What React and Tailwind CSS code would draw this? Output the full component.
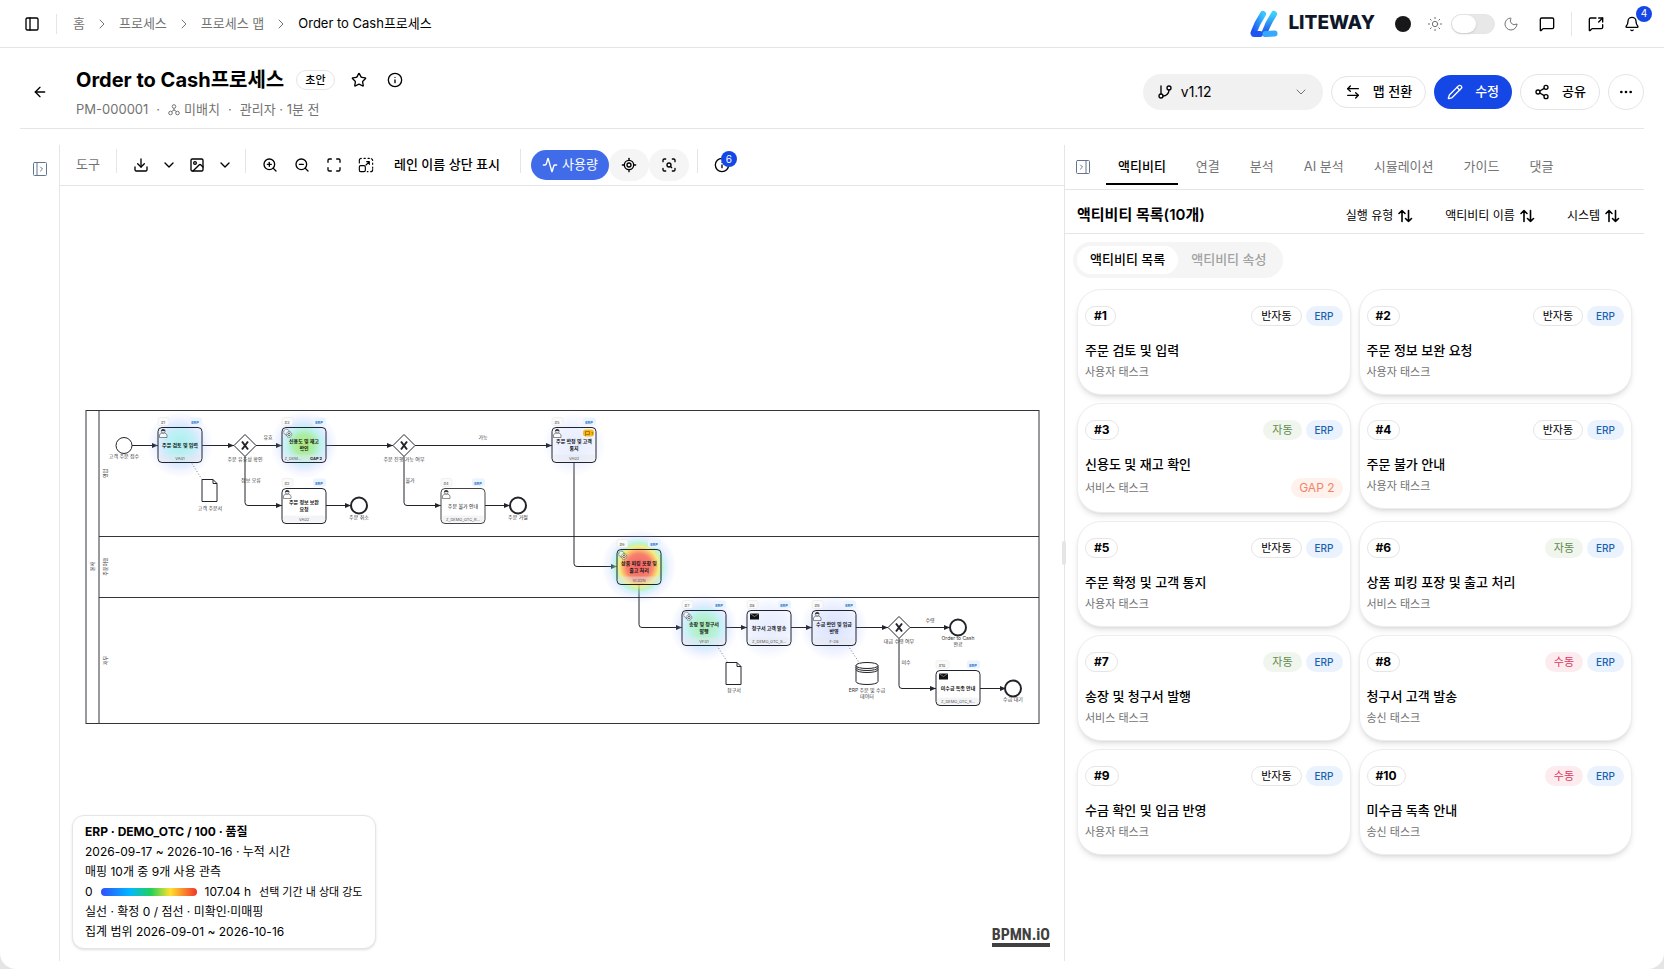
import React from 'react';
import {
  Activity, ArrowLeft, ArrowLeftRight, Bell, ChevronDown, ChevronRight, Download, Ellipsis, GitBranch,
  Image, Info, LocateFixed, Maximize, MessageSquare, MessageSquareShare, Moon, PanelLeft, Pencil, ScanSearch,
  Share2, Star, Sun, ZoomIn, ZoomOut,
} from 'lucide-react';

const activities = [
  { id: 1, mode: '반자동', name: '주문 검토 및 입력', type: '사용자 태스크' },
  { id: 2, mode: '반자동', name: '주문 정보 보완 요청', type: '사용자 태스크' },
  { id: 3, mode: '자동', name: '신용도 및 재고 확인', type: '서비스 태스크', gap: 'GAP 2' },
  { id: 4, mode: '반자동', name: '주문 불가 안내', type: '사용자 태스크' },
  { id: 5, mode: '반자동', name: '주문 확정 및 고객 통지', type: '사용자 태스크' },
  { id: 6, mode: '자동', name: '상품 피킹 포장 및 출고 처리', type: '서비스 태스크' },
  { id: 7, mode: '자동', name: '송장 및 청구서 발행', type: '서비스 태스크' },
  { id: 8, mode: '수동', name: '청구서 고객 발송', type: '송신 태스크' },
  { id: 9, mode: '반자동', name: '수금 확인 및 입금 반영', type: '사용자 태스크' },
  { id: 10, mode: '수동', name: '미수금 독촉 안내', type: '송신 태스크' },
];

const modeStyles = {
  반자동: 'border border-neutral-200 text-black',
  자동: 'bg-[#f0f5ee] text-[#5f8a4c]',
  수동: 'bg-[#fdecef] text-[#e0375c]',
};

const tabs = ['액티비티', '연결', '분석', 'AI 분석', '시뮬레이션', '가이드', '댓글'];

const tasks = [
  { id: 1, x: 158, y: 427, lines: ['주문 검토 및 입력'], code: 'VA01', kind: 'user', heat: 'cyan' },
  { id: 3, x: 282, y: 427, lines: ['신용도 및 재고', '확인'], code: 'Z_DEM...', kind: 'service', heat: 'green', gap: true },
  { id: 5, x: 552, y: 427, lines: ['주문 확정 및 고객', '통지'], code: 'VA02', kind: 'user', heat: 'blue', note: true },
  { id: 2, x: 282, y: 488, lines: ['주문 정보 보완', '요청'], code: 'VA02', kind: 'user' },
  { id: 4, x: 441, y: 488, lines: ['주문 불가 안내'], code: 'Z_DEMO_OTC_R...', kind: 'user', light: true },
  { id: 6, x: 617, y: 549, lines: ['상품 피킹 포장 및', '출고 처리'], code: 'VL02N', kind: 'service', heat: 'red' },
  { id: 7, x: 682, y: 610, lines: ['송장 및 청구서', '발행'], code: 'VF01', kind: 'service', heat: 'teal' },
  { id: 8, x: 747, y: 610, lines: ['청구서 고객 발송'], code: 'Z_DEMO_OTC_S...', kind: 'send', heat: 'blue' },
  { id: 9, x: 812, y: 610, lines: ['수금 확인 및 입금', '반영'], code: 'F-28', kind: 'user', heat: 'indigo' },
  { id: 10, x: 936, y: 670, lines: ['미수금 독촉 안내'], code: 'Z_DEMO_OTC_R...', kind: 'send' },
];

const heats = {
  cyan: { r: 33, stops: [['0', '#8fe9e6', 0.75], ['0.4', '#9be9f0', 0.65], ['0.62', '#9ccbff', 0.35], ['0.8', '#8fa8ff', 0.1], ['1', '#5b7bff', 0]] },
  green: { r: 34, stops: [['0', '#a5e65f', 0.85], ['0.3', '#8fe88a', 0.75], ['0.55', '#8de6ee', 0.5], ['0.7', '#8fb4ff', 0.22], ['0.85', '#7f9dff', 0.07], ['1', '#5b7bff', 0]] },
  teal: { r: 34, stops: [['0', '#93e8a8', 0.8], ['0.35', '#98ebc4', 0.7], ['0.55', '#8de0f3', 0.45], ['0.7', '#8fb4ff', 0.22], ['0.85', '#7f9dff', 0.07], ['1', '#5b7bff', 0]] },
  blue: { r: 32, stops: [['0', '#9db4ff', 0.25], ['0.6', '#9db4ff', 0.16], ['1', '#9db4ff', 0]] },
  indigo: { r: 34, stops: [['0', '#86a2ff', 0.32], ['0.6', '#86a2ff', 0.18], ['1', '#86a2ff', 0]] },
  red: { r: 37, stops: [['0', '#f2464a', 0.85], ['0.34', '#f5604a', 0.8], ['0.46', '#fbb24a', 0.8], ['0.54', '#ecea5c', 0.75], ['0.63', '#8fe8a0', 0.55], ['0.72', '#7fe0f5', 0.35], ['0.82', '#8fa8ff', 0.12], ['1', '#5b7bff', 0]] },
};

const flows = [
  'M132 445H158', 'M202 445H234', 'M256 445H282', 'M245 456V502Q245 505 248 505H282', 'M326 445H393',
  'M326 505H351', 'M415 445H552', 'M404 456V502Q404 505 407 505H441', 'M485 505H510',
  'M574 462V563Q574 566 577 566H617', 'M639 584V624Q639 627 642 627H682', 'M726 627H747', 'M791 627H812',
  'M856 627H888', 'M910 627H950', 'M899 638V685Q899 688 902 688H936', 'M980 688H1006',
];

const labels = [
  [124, 457, '고객 주문 접수'], [245, 460, '주문 유효성 확인'], [268, 438, '유효'], [251, 481, '정보 오류'],
  [404, 460, '주문 진행 가능 여부'], [483, 438, '가능'], [410, 481, '불가'], [359, 518, '주문 취소'],
  [518, 518, '주문 거절'], [210, 509, '고객 주문서'], [734, 691, '청구서'], [867, 691, 'ERP 주문 및 수금'],
  [867, 697, '데이터'], [899, 642, '대금 수령 여부'], [930, 621, '수령'], [906, 663, '미수'],
  [958, 639, 'Order to Cash'], [958, 645, '완료'], [1013, 700, '수금 대기'],
];

const LiteWayMark = () => (
  <svg viewBox="0 0 28 28" className="size-7" fill="none" strokeLinecap="round" aria-hidden="true">
    <defs>
      <linearGradient id="markA" x1="0" y1="1" x2="1" y2="0">
        <stop offset="0" stopColor="#1d4ff0" />
        <stop offset="1" stopColor="#38c6ff" />
      </linearGradient>
      <linearGradient id="markB" x1="0" y1="0" x2="0" y2="1">
        <stop offset="0" stopColor="#3ed0ff" />
        <stop offset="1" stopColor="#1a55e8" />
      </linearGradient>
    </defs>
    <path d="M13 4 Q7 13 3.500 23" stroke="url(#markA)" strokeWidth="6" />
    <path d="M4 24 L10 24" stroke="#1d55f2" strokeWidth="6" />
    <path d="M24 4 Q18 13 14.500 23" stroke="url(#markB)" strokeWidth="6" />
    <path d="M15.500 24 L24.500 23.500" stroke="#38a8ff" strokeWidth="6" />
  </svg>
);

const ScaleDashed = () => (
  <svg viewBox="0 0 24 24" className="size-4" fill="none" stroke="currentColor" strokeWidth="1.700" strokeLinecap="round" strokeLinejoin="round" aria-hidden="true">
    <path d="M2 9V5a3 3 0 0 1 3-3M9 2h2M15 2h2M20 2.500a3 3 0 0 1 2 2.500M22 9v2M22 15v2M22 19a3 3 0 0 1-3 3M15 22h-1" />
    <path d="M12 12l5-5M13 7h4v4" />
    <rect x="2" y="13" width="9" height="9" rx="2" />
  </svg>
);

const PanelToggle = () => (
  <svg viewBox="0 0 16 16" className="size-4" fill="none" stroke="currentColor" strokeLinecap="round" strokeLinejoin="round" aria-hidden="true">
    <rect x="1.500" y="1.500" width="13" height="13" rx="1" />
    <path d="M5 1.500v13M8.500 6l2 2-2 2" />
  </svg>
);

const PanelToggleRight = () => (
  <svg viewBox="0 0 16 16" className="size-4" fill="none" stroke="currentColor" strokeLinecap="round" strokeLinejoin="round" aria-hidden="true">
    <rect x="1.500" y="1.500" width="13" height="13" rx="1" />
    <path d="M11 1.500v13M5.500 6l2 2-2 2" />
  </svg>
);

const OrgIcon = () => (
  <svg viewBox="0 0 12 12" className="size-3" fill="none" stroke="currentColor" aria-hidden="true">
    <circle cx="6" cy="2.500" r="1.800" />
    <circle cx="2.500" cy="9" r="1.800" />
    <circle cx="9.500" cy="9" r="1.800" />
    <path d="M6 4.300V6M3.500 7.500L6 6l2.500 1.500" />
  </svg>
);

const SortIcon = () => (
  <svg viewBox="0 0 16 16" className="size-4" fill="none" stroke="currentColor" strokeWidth="1.600" strokeLinecap="round" strokeLinejoin="round" aria-hidden="true">
    <path d="M5 13.500V2.500M2 5.500l3-3 3 3M11.500 2.500v11M8.500 10.500l3 3 3-3" />
  </svg>
);

const TopBar = () => (
  <header className="flex h-12 shrink-0 items-center border-b border-neutral-200 px-6">
    <button type="button" aria-label="사이드바"><PanelLeft className="size-4" /></button>
    <span className="ml-4 h-5 w-px bg-neutral-200" />
    <nav className="ml-4 flex items-center gap-[9px] text-[13px] text-neutral-500">
      <a href="#home">홈</a>
      <ChevronRight className="size-4" strokeWidth={1.5} />
      <a href="#process">프로세스</a>
      <ChevronRight className="size-4" strokeWidth={1.5} />
      <a href="#map">프로세스 맵</a>
      <ChevronRight className="size-4" strokeWidth={1.5} />
      <span className="text-black">Order to Cash프로세스</span>
    </nav>
    <div className="ml-auto flex items-center">
      <LiteWayMark />
      <span className="ml-2.5 text-[19px] font-extrabold text-[#0f172a]">LITEWAY</span>
      <span className="ml-5 size-4 rounded-full bg-[#18181b]" />
      <Sun className="ml-4 size-4 text-neutral-500" strokeWidth={1.5} />
      <label className="relative ml-2 h-5 w-11 rounded-full border border-neutral-200 bg-[#e8e8e8]">
        <input type="checkbox" className="peer sr-only" aria-label="다크 모드" />
        <span className="block h-full w-6 rounded-full bg-white shadow-sm peer-checked:ml-auto" />
      </label>
      <Moon className="ml-2 size-4 text-neutral-500" strokeWidth={1.5} />
      <button type="button" className="ml-5" aria-label="메시지"><MessageSquare className="size-4" /></button>
      <span className="ml-4 h-6 w-px bg-neutral-200" />
      <button type="button" className="ml-4" aria-label="요청"><MessageSquareShare className="size-4" /></button>
      <button type="button" className="relative ml-5" aria-label="알림">
        <Bell className="size-4" />
        <span className="absolute -right-3 -top-2.5 flex size-4 items-center justify-center rounded-full bg-[#1447e6] text-[10px] text-white">4</span>
      </button>
    </div>
  </header>
);

const PageHeader = () => (
  <div className="mx-5 flex shrink-0 items-center border-b border-neutral-200 pb-2 pt-4">
    <button type="button" className="ml-3 size-4" aria-label="뒤로"><ArrowLeft className="size-4" /></button>
    <div className="ml-7">
      <div className="flex h-8 items-center">
        <h1 className="text-xl font-bold">Order to Cash프로세스</h1>
        <span className="ml-3 flex h-5 items-center rounded-full border border-neutral-200 px-2 text-[11px] font-medium">초안</span>
        <button type="button" className="ml-4" aria-label="즐겨찾기"><Star className="size-4" /></button>
        <button type="button" className="ml-5" aria-label="정보"><Info className="size-4" /></button>
      </div>
      <div className="mt-1 flex h-5 items-center gap-2 text-[13px] text-neutral-500">
        <span>PM-000001</span>
        <span>·</span>
        <span className="flex items-center gap-1"><OrgIcon />미배치</span>
        <span>·</span>
        <span>관리자 · 1분 전</span>
      </div>
    </div>
    <div className="ml-auto flex items-center gap-2 text-[13px] font-medium">
      <button type="button" className="flex h-9 w-[180px] items-center rounded-full bg-[#f1f1f1] px-3.5 text-sm font-normal">
        <GitBranch className="size-4" />
        <span className="ml-2">v1.12</span>
        <ChevronDown className="ml-auto size-4 text-neutral-500" strokeWidth={1.5} />
      </button>
      <button type="button" className="flex h-8 items-center gap-3 rounded-full border border-neutral-200 px-[13px]"><ArrowLeftRight className="size-4" />맵 전환</button>
      <button type="button" className="flex h-[34px] items-center gap-3 rounded-full bg-[#1447e6] px-[13px] text-white"><Pencil className="size-4" />수정</button>
      <button type="button" className="flex h-9 items-center gap-3 rounded-full border border-neutral-200 px-[13px]"><Share2 className="size-4" />공유</button>
      <button type="button" className="flex size-9 items-center justify-center rounded-full border border-neutral-200" aria-label="더보기"><Ellipsis className="size-4" /></button>
    </div>
  </div>
);

const ToolbarDivider = ({ className }) => (
  <span className={`mt-1 h-6 w-px self-start bg-neutral-200 ${className}`} />
);

const Toolbar = () => (
  <div className="flex h-[41px] shrink-0 items-center border-b border-neutral-200 pl-4 text-[13px]">
    <span className="text-neutral-500">도구</span>
    <ToolbarDivider className="ml-4" />
    <button type="button" className="ml-4" aria-label="내보내기"><Download className="size-4" /></button>
    <button type="button" className="ml-3" aria-label="내보내기 메뉴"><ChevronDown className="size-4" /></button>
    <button type="button" className="ml-3" aria-label="이미지"><Image className="size-4" /></button>
    <button type="button" className="ml-3" aria-label="이미지 메뉴"><ChevronDown className="size-4" /></button>
    <ToolbarDivider className="ml-3" />
    <button type="button" className="ml-4" aria-label="확대"><ZoomIn className="size-4" /></button>
    <button type="button" className="ml-4" aria-label="축소"><ZoomOut className="size-4" /></button>
    <button type="button" className="ml-4" aria-label="전체 화면"><Maximize className="size-4" /></button>
    <button type="button" className="ml-4" aria-label="화면 맞춤"><ScaleDashed /></button>
    <button type="button" className="ml-5 font-medium">레인 이름 상단 표시</button>
    <ToolbarDivider className="ml-5" />
    <button type="button" className="ml-2.5 flex h-[30px] items-center gap-1 rounded-full bg-[#416ce9] px-[11px] text-white"><Activity className="size-4" />사용량</button>
    <button type="button" className="flex h-8 w-10 items-center justify-center rounded-full bg-[#f5f5f5]" aria-label="위치"><LocateFixed className="size-4" /></button>
    <button type="button" className="flex h-8 w-10 items-center justify-center rounded-full bg-[#f5f5f5]" aria-label="영역 검색"><ScanSearch className="size-4" /></button>
    <ToolbarDivider className="ml-2" />
    <button type="button" className="relative ml-4" aria-label="알림 정보">
      <Info className="size-4" />
      <span className="absolute -top-1.5 left-[7px] flex size-4 items-center justify-center rounded-full bg-[#1447e6] text-[10px] text-white">6</span>
    </button>
  </div>
);

const TaskMark = ({ kind }) => {
  if (kind === 'send') {
    return (
      <g>
        <rect x="3" y="3" width="9" height="6" fill="#111" />
        <path d="M3 3l4.500 3L12 3" fill="none" stroke="#ccc" strokeWidth="0.500" />
      </g>
    );
  }
  if (kind === 'service') {
    return (
      <g fill="#ffffff88" stroke="#222" strokeWidth="0.600">
        <circle cx="4.500" cy="4.500" r="2.800" strokeDasharray="1.200 0.500" />
        <circle cx="7" cy="7" r="2.800" strokeDasharray="1.200 0.500" />
        <circle cx="7" cy="7" r="1.200" />
      </g>
    );
  }
  return (
    <g fill="#ffffffaa" stroke="#222" strokeWidth="0.500">
      <path d="M1.500 10V7.500Q2 6 4 5.500H6.500Q8.500 6 9 7.500V10Z" />
      <circle cx="5.200" cy="3.700" r="1.900" />
      <path d="M3.400 3.200a1.900 1.900 0 0 1 3.600 0z" fill="#222" />
    </g>
  );
};

const Task = ({ task }) => {
  const lineY = task.lines.length === 1 ? 19 : 15;
  const ink = task.light ? '#444' : '#1f2430';
  return (
    <g transform={`translate(${task.x} ${task.y})`} textAnchor="middle">
      <rect width="44" height="35" rx="4" fill="#fff" />
      {task.heat && <circle cx="22" cy="17" r={heats[task.heat].r} fill={`url(#heat-${task.heat})`} />}
      <rect x="1" y="27" width="42" height="7" rx="3" fill="#e5e7eb" fillOpacity="0.45" />
      <rect width="44" height="35" rx="4" fill="none" stroke={ink} strokeWidth="1" />
      <TaskMark kind={task.kind} />
      {task.lines.map((line, i) => (
        <text key={line} x="22" y={lineY + i * 7} fontSize="5" fontWeight={task.light ? 400 : 700} fill="#111">{line}</text>
      ))}
      <text x={task.gap ? 11 : 22} y="32" fontSize="4" fill="#555">{task.code}</text>
      {task.gap && <text x="34" y="32" fontSize="4" fontWeight="700" fill="#222">GAP 2</text>}
      {task.note && <rect x="31" y="2" width="11" height="7" rx="3" fill="#f9b917" />}
      {task.note && <path d="M33.500 4h4v3h-3l-1 1z" fill="none" stroke="#5a3d00" strokeWidth="0.500" />}
      {task.note && <text x="40" y="7" fontSize="4" fill="#5a3d00">1</text>}
      <rect x="0" y="-10" width={task.id === 10 ? 13 : 11} height="8" rx="2" fill="#fafafa" stroke="#ddd" strokeWidth="0.400" />
      <text x={task.id === 10 ? 6 : 5} y="-4" fontSize="4" fill="#444">#{task.id}</text>
      <rect x="31" y="-10" width="13" height="8" rx="2" fill="#eaf3ff" />
      <text x="37" y="-4" fontSize="4" fontWeight="600" fill="#1b6ec2">ERP</text>
    </g>
  );
};

const Gateway = ({ x, y }) => (
  <g transform={`translate(${x} ${y})`} stroke="#22242a">
    <path d="M0-11L11 0 0 11-11 0Z" fill="#fff" />
    <path d="M-3-4L3 4M3-4L-3 4" strokeWidth="2" />
  </g>
);

const ProcessDiagram = () => (
  <svg viewBox="60 186 1004 774" className="size-full" role="img" aria-label="Order to Cash 프로세스 맵">
    <defs>
      <marker id="arrow" viewBox="0 0 6 6" refX="6" refY="3" markerWidth="6" markerHeight="6" markerUnits="userSpaceOnUse" orient="auto">
        <path d="M0 0.500L6 3 0 5.500Z" fill="#22242a" />
      </marker>
      {Object.entries(heats).map(([name, heat]) => (
        <radialGradient key={name} id={`heat-${name}`}>
          {heat.stops.map(([offset, color, opacity]) => (
            <stop key={offset} offset={offset} stopColor={color} stopOpacity={opacity} />
          ))}
        </radialGradient>
      ))}
    </defs>

    {/* pool and lanes */}
    <g fill="none" stroke="#33353b" strokeWidth="1">
      <rect x="86" y="410" width="953" height="313" />
      <path d="M99 410V723M99 536H1039M99 597H1039" />
    </g>
    <g fontSize="5" fill="#333" textAnchor="middle">
      <text transform="translate(94 566) rotate(-90)">본사</text>
      <text transform="translate(107 473) rotate(-90)">영업</text>
      <text transform="translate(107 566) rotate(-90)">주문이행</text>
      <text transform="translate(107 660) rotate(-90)">재무</text>
    </g>

    <g fill="none" stroke="#22242a" strokeWidth="1">
      {flows.map((d) => <path key={d} d={d} markerEnd="url(#arrow)" />)}
      <path d="M192 463L202 479M717 645L727 661M848 645L859 662" strokeWidth="0.600" strokeDasharray="1 2" />
    </g>

    <g fill="#fff" stroke="#22242a">
      <circle cx="124" cy="445" r="8" />
      <circle cx="359" cy="505" r="8" strokeWidth="2" />
      <circle cx="518" cy="505" r="8" strokeWidth="2" />
      <circle cx="958" cy="627" r="8" strokeWidth="2" />
      <circle cx="1013" cy="688" r="8" strokeWidth="2" />
      <path d="M202 479h11l4 4v18h-15zM213 479v4h4" />
      <path d="M726 662h11l4 4v18h-15zM737 662v4h4" />
      <path d="M856 665v16c0 4 22 4 22 0v-16c0-4-22-4-22 0c0 4 22 4 22 0M856 667c0 4 22 4 22 0M856 669c0 4 22 4 22 0" />
    </g>
    <Gateway x={245} y={445} />
    <Gateway x={404} y={445} />
    <Gateway x={899} y={627} />
    {tasks.map((task) => <Task key={task.id} task={task} />)}
    <g fontSize="5" fill="#333" textAnchor="middle">
      {labels.map(([x, y, text]) => <text key={`${x}-${y}`} x={x} y={y}>{text}</text>)}
    </g>
  </svg>
);

const Legend = () => (
  <div className="absolute bottom-3 left-3 rounded-xl border border-neutral-200 bg-white px-3 py-1.5 text-xs leading-5 shadow-sm">
    <p className="font-bold">ERP · DEMO_OTC / 100 · 품질</p>
    <p>2026-09-17 ~ 2026-10-16 · 누적 시간</p>
    <p>매핑 10개 중 9개 사용 관측</p>
    <p className="flex items-center gap-2">
      <span>0</span>
      <span className="h-2 w-24 rounded-full bg-[linear-gradient(90deg,#304ffe,#00b8ff_30%,#22d05a_52%,#ffe02e_72%,#f2332b)]" />
      <span>107.04 h</span>
      <span className="text-[11px]">선택 기간 내 상대 강도</span>
    </p>
    <p>실선 · 확정 0 / 점선 · 미확인·미매핑</p>
    <p>집계 범위 2026-09-01 ~ 2026-10-16</p>
  </div>
);

const ActivityCard = ({ activity }) => (
  <article className="rounded-3xl border border-[#ededed] bg-white px-[7px] pb-3.5 pt-4 shadow-md">
    <div className="flex h-5 items-center gap-1 text-[11px]">
      <span className="flex h-5 items-center rounded-full border border-neutral-200 px-2 text-xs font-bold">#{activity.id}</span>
      <span className={`ml-auto flex h-5 items-center rounded-full px-[9px] ${modeStyles[activity.mode]}`}>{activity.mode}</span>
      <span className="flex h-5 items-center rounded-full bg-[#eaf2fe] px-[9px] text-[10px] font-medium text-[#1761b0]">ERP</span>
    </div>
    <h3 className="mt-3 text-[13px] font-medium leading-6">{activity.name}</h3>
    <div className="mt-0.5 flex items-center justify-between text-[11px] leading-4 text-neutral-500">
      <span>{activity.type}</span>
      {activity.gap && <span className="flex h-5 items-center rounded-full bg-[#fff1ec] px-2 text-xs text-[#f28465]">{activity.gap}</span>}
    </div>
  </article>
);

const SortButton = ({ label }) => (
  <button type="button" className="flex items-center gap-1 text-xs">{label}<SortIcon /></button>
);

const ActivityPanel = () => (
  <aside className="relative w-[580px] shrink-0 border-l border-neutral-200">
    <span className="absolute -left-[3px] top-[396px] h-6 w-1 rounded-full bg-neutral-200" />
    <div className="flex h-[45px] items-center border-b border-neutral-200 pl-2.5 text-[13px]">
      <button type="button" className="text-slate-500" aria-label="패널 접기"><PanelToggleRight /></button>
      <div className="ml-[15px] flex h-full items-center gap-1.5" role="tablist">
        {tabs.map((tab, i) => (
          <button
            key={tab}
            type="button"
            role="tab"
            aria-selected={i === 0}
            className={i === 0 ? 'h-9 border-b-2 border-black px-3 pt-0.5 font-medium' : 'h-9 px-3 text-neutral-500'}
          >
            {tab}
          </button>
        ))}
      </div>
    </div>
    <div className="flex h-11 items-center border-b border-neutral-200 pl-3 pr-6 pt-2">
      <h2 className="text-[15px] font-semibold">액티비티 목록(10개)</h2>
      <div className="ml-auto flex gap-8">
        <SortButton label="실행 유형" />
        <SortButton label="액티비티 이름" />
        <SortButton label="시스템" />
      </div>
    </div>
    <div className="ml-2 mt-2 flex h-9 w-fit items-center rounded-full bg-[#f5f5f5] p-1 text-[13px] font-medium">
      <button type="button" className="h-7 rounded-full bg-white px-[13px]">액티비티 목록</button>
      <button type="button" className="px-[13px] text-neutral-400">액티비티 속성</button>
    </div>
    <div className="mx-3 mt-[11px] grid grid-cols-2 items-start gap-2">
      {activities.map((activity) => <ActivityCard key={activity.id} activity={activity} />)}
    </div>
  </aside>
);

export default function App() {
  return (
    <div className="h-screen bg-neutral-200">
      <div className="flex h-full flex-col overflow-hidden rounded-b-2xl bg-white font-[Inter,'Noto_Sans_CJK_KR',sans-serif] text-black">
        <TopBar />
        <PageHeader />
        <main className="mx-5 mb-2 mt-4 flex min-h-0 flex-1">
          <div className="w-10 shrink-0 border-r border-neutral-200 pl-3 pt-3.5 text-slate-500">
            <button type="button" aria-label="패널 펼치기"><PanelToggle /></button>
          </div>
          <section className="flex min-w-0 flex-1 flex-col">
            <Toolbar />
            <div className="relative min-h-0 flex-1">
              <ProcessDiagram />
              <Legend />
              <a href="#bpmn" className="absolute bottom-3.5 right-3.5 border-b-4 border-[#404040] font-['Liberation_Sans_Narrow','Roboto_Condensed',Roboto,sans-serif] text-base font-bold leading-4 text-[#404040]">BPMN.iO</a>
            </div>
          </section>
          <ActivityPanel />
        </main>
      </div>
    </div>
  );
}
